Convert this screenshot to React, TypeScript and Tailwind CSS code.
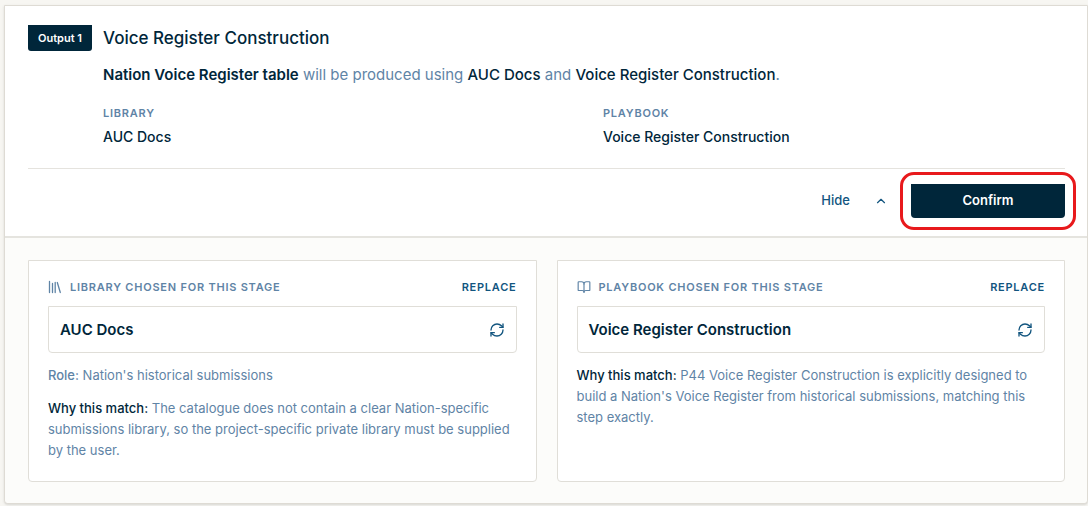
import { useState } from 'react';
import type { ReactNode } from 'react';
import { BookOpen, ChevronUp, RefreshCw } from 'lucide-react';

function LibraryIcon() {
  return (
    <svg
      viewBox="0 0 14 14"
      className="w-[14px] h-[14px]"
      fill="none"
      stroke="currentColor"
      strokeWidth="1.3"
      strokeLinecap="round"
      aria-hidden="true"
    >
      <path d="M1.5 1.5v11M4.5 3.5v9M7.2 2.5v10M9.3 2.5l3 10" />
    </svg>
  );
}

function SummaryField({ label, value }: { label: string; value: string }) {
  return (
    <div>
      <dt className="text-[11px] leading-4 font-semibold tracking-[0.07em] text-[#5f84a6]">{label}</dt>
      <dd className="mt-2 text-sm leading-4 font-medium">{value}</dd>
    </div>
  );
}

type StageCardProps = {
  icon: ReactNode;
  heading: string;
  name: string;
  role?: string;
  reason: string;
};

function StageCard({ icon, heading, name, role, reason }: StageCardProps) {
  return (
    <section className="rounded-b-[4px] border border-[#e0ded8] bg-white px-[19px] pt-[18px] pb-5">
      <div className="flex items-center justify-between">
        <h3 className="flex items-center gap-2 text-[11px] leading-4 font-semibold tracking-[0.07em] text-[#5f84a6]">
          {icon}
          {heading}
        </h3>
        <button type="button" className="text-[11px] leading-4 font-semibold tracking-[0.07em] text-[#12557f]">
          REPLACE
        </button>
      </div>
      <div className="mt-[11px] flex h-[47px] items-center justify-between rounded-b-[4px] border border-[#e0ded8] px-[11px]">
        <span className="text-[15px] leading-5 font-semibold">{name}</span>
        <button type="button" aria-label={`Refresh ${name}`} className="text-[#12557f]">
          <RefreshCw size={16} strokeWidth={2} />
        </button>
      </div>
      <div className="mt-3 space-y-3 text-[13px] leading-[21px] text-[#5f84a6]">
        {role && (
          <p>
            <span className="font-medium">Role:</span> {role}
          </p>
        )}
        <p>
          <span className="font-medium text-[#00263a]">Why this match:</span> {reason}
        </p>
      </div>
    </section>
  );
}

export default function App() {
  const [open, setOpen] = useState(true);

  return (
    <main className="min-h-screen bg-[#f7f6f2] pt-[5px] pl-1 font-['Inter',sans-serif] text-[#00263a]">
      <article className="rounded-b-[4px] border border-[#dedbd4] bg-white shadow-sm">
        <div className="pt-[19px] pr-[22px] pb-[18px] pl-[23px]">
          {/* Output header */}
          <header className="flex items-start gap-[11px] pb-[23px]">
            <span className="flex h-[26px] w-16 shrink-0 items-center justify-center rounded-b-[3px] bg-[#00263a] text-[11px] font-semibold text-white">
              Output 1
            </span>
            <div className="flex-1">
              <h2 className="text-[17px] leading-[26px] font-medium">Voice Register Construction</h2>
              <p className="mt-3 text-[15px] leading-6 text-[#5f84a6]">
                <strong className="font-semibold text-[#00263a]">Nation Voice Register table</strong> will be produced
                using <span className="font-medium text-[#00263a]">AUC Docs</span> and{' '}
                <span className="font-medium text-[#00263a]">Voice Register Construction</span>.
              </p>
              <dl className="mt-[18px] grid grid-cols-2 gap-[38px]">
                <SummaryField label="LIBRARY" value="AUC Docs" />
                <SummaryField label="PLAYBOOK" value="Voice Register Construction" />
              </dl>
            </div>
          </header>

          {/* Actions */}
          <div className="flex items-center justify-end border-t border-[#e5e3de] pt-[15px]">
            <button
              type="button"
              aria-expanded={open}
              onClick={() => setOpen(!open)}
              className="mr-[23px] flex items-center gap-6 text-[13px] font-medium text-[#12557f]"
            >
              {open ? 'Hide' : 'Show'}
              <ChevronUp size={14} className={open ? '' : 'rotate-180'} />
            </button>
            <div className="relative">
              <button
                type="button"
                className="h-[34px] w-[154px] rounded-b-[4px] bg-[#00263a] text-[13px] font-semibold text-white"
              >
                Confirm
              </button>
              <span className="pointer-events-none absolute -inset-x-[11px] -inset-y-[12px] rounded-[14px] border-3 border-[#e8191c]" />
            </div>
          </div>
        </div>

        {/* Chosen sources */}
        {open && (
          <div className="grid grid-cols-2 gap-5 rounded-b-[4px] border-t-2 border-[#e5e4df] bg-[#fcfcfa] pt-[22px] pr-[22px] pb-[21px] pl-[23px]">
            <StageCard
              icon={<LibraryIcon />}
              heading="LIBRARY CHOSEN FOR THIS STAGE"
              name="AUC Docs"
              role="Nation's historical submissions"
              reason="The catalogue does not contain a clear Nation-specific submissions library, so the project-specific private library must be supplied by the user."
            />
            <StageCard
              icon={<BookOpen size={14} strokeWidth={2} />}
              heading="PLAYBOOK CHOSEN FOR THIS STAGE"
              name="Voice Register Construction"
              reason="P44 Voice Register Construction is explicitly designed to build a Nation's Voice Register from historical submissions, matching this step exactly."
            />
          </div>
        )}
      </article>
    </main>
  );
}
